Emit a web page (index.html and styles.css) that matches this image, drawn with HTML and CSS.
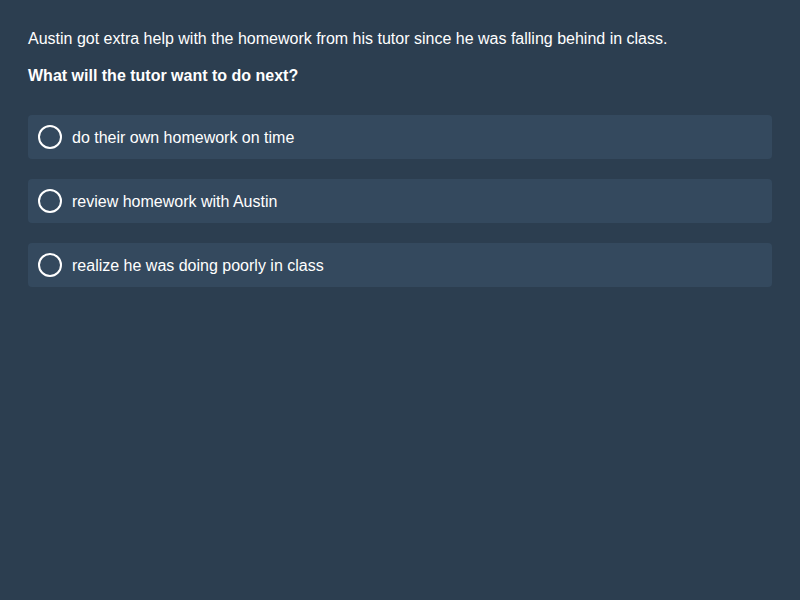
FILE: index.html
```html
<!DOCTYPE html>
<html>
<head>
<meta charset="utf-8">
<link rel="stylesheet" href="styles.css">
</head>
<body>
<main class="quiz">
  <p class="context">Austin got extra help with the homework from his tutor since he was falling behind in class.</p>
  <p class="question">What will the tutor want to do next?</p>
  <div class="options">
    <label class="option"><span class="radio"></span><span class="label">do their own homework on time</span></label>
    <label class="option"><span class="radio"></span><span class="label">review homework with Austin</span></label>
    <label class="option"><span class="radio"></span><span class="label">realize he was doing poorly in class</span></label>
  </div>
</main>
</body>
</html>
```
FILE: styles.css
```css
html, body {
  margin: 0;
  height: 100%;
  background: #2c3e50;
}
body {
  font-family: "Liberation Sans", Arial, sans-serif;
  font-size: 16px;
  color: #ffffff;
}
.quiz {
  padding: 29px 28px 28px;
}
.context {
  margin: 0 0 17px;
  line-height: 20px;
}
.question {
  margin: 0 0 29px;
  line-height: 20px;
  font-weight: bold;
}
.options {
  display: flex;
  flex-direction: column;
  gap: 20px;
}
.option {
  display: flex;
  align-items: center;
  gap: 10px;
  height: 44px;
  box-sizing: border-box;
  padding: 0 10px;
  background: #34495e;
  border-radius: 4px;
}
.radio {
  width: 24px;
  height: 24px;
  box-sizing: border-box;
  border: 2px solid #ffffff;
  border-radius: 50%;
  flex: none;
}
.label {
  line-height: 20px;
  padding-top: 2px;
}
```
